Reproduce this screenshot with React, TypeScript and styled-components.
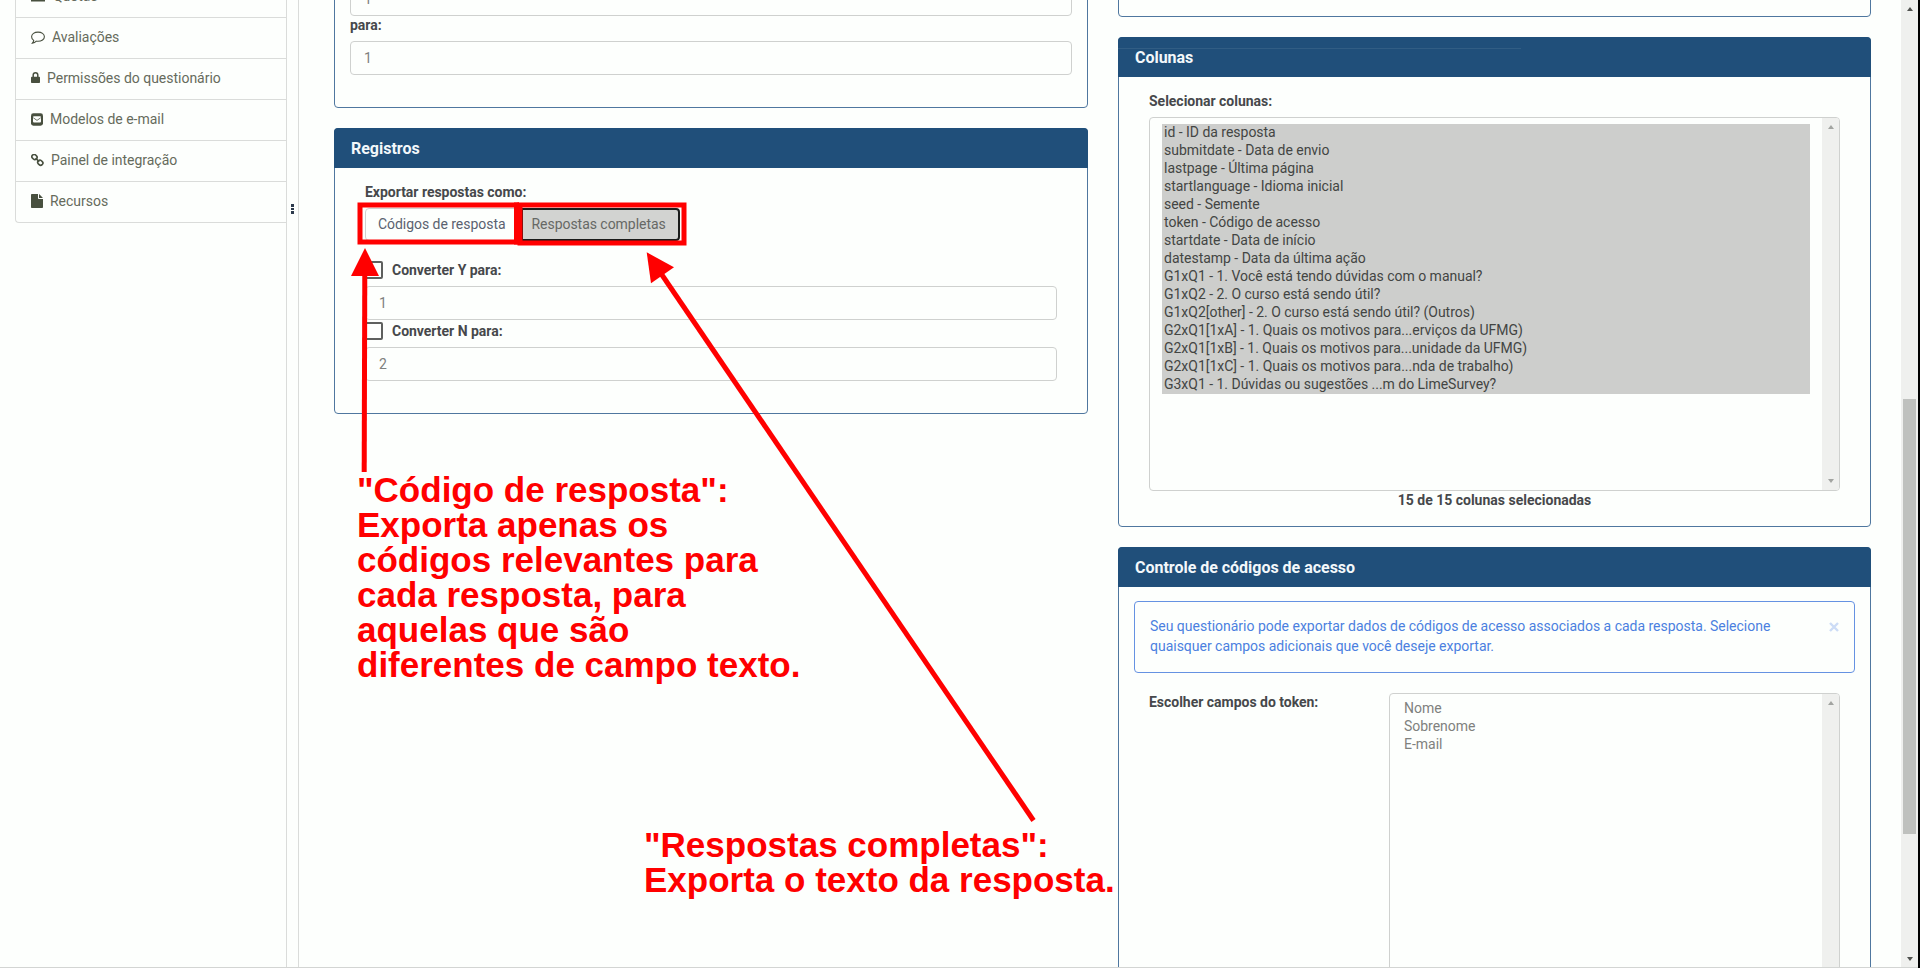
import React from 'react';
import styled, { createGlobalStyle, css } from 'styled-components';

const color = {
  page: '#fdfffd',
  navy: '#204f7a',
  panelBorder: '#4f779f',
  line: '#dadcda',
  field: '#cfd1cf',
  label: '#46484b',
  text: '#7f817e',
  nav: '#666b5c',
  navIcon: '#48503f',
  track: '#eff0ee',
  thumb: '#bfc1be',
  blue: '#4b7fe0',
  red: '#ff0000',
};

const GlobalStyle = createGlobalStyle`
  *, *::before, *::after { box-sizing: border-box; }
  html, body { margin: 0; overflow: hidden; background: ${color.page}; }
  body { font-family: Roboto, "Liberation Sans", sans-serif; font-size: 14px; line-height: 20px; }
`;

const Page = styled.div`
  position: relative;
  display: flex;
  width: 1920px;
  height: 968px;
  overflow: hidden;
  background: ${color.page};
`;

const Content = styled.div`
  display: flex;
  flex: 1;
  height: 968px;
  overflow: hidden;
  border-bottom: 1px solid #d3d5d3;
`;

/* ---------- sidebar ---------- */

const Sidebar = styled.aside`
  width: 287px;
  padding-left: 15px;
  border-right: 1px solid ${color.line};
`;

const NavList = styled.ul`
  list-style: none;
  margin: -24px 0 0;
  padding: 0;
  border: 1px solid ${color.line};
  border-width: 0 0 1px 1px;
  border-radius: 0 0 0 4px;
`;

const NavItem = styled.li<{ $gap: number }>`
  display: flex;
  align-items: center;
  gap: ${(p) => p.$gap}px;
  height: 41px;
  padding: 0 15px 2px;
  border-top: 1px solid ${color.line};
  color: ${color.nav};
  letter-spacing: -0.02px;
  svg { display: block; flex: none; color: ${color.navIcon}; }
`;

const Handle = styled.div`
  display: flex;
  flex-direction: column;
  align-items: center;
  gap: 1px;
  width: 12px;
  padding-top: 204px;
  border-right: 1px solid ${color.line};
`;

const HandleDot = styled.span`
  width: 3px;
  height: 2.6px;
  background: #2c3a4c;
`;

/* ---------- panels ---------- */

const Main = styled.main`
  display: flex;
  flex: 1;
  align-items: flex-start;
  gap: 30px;
  padding-left: 35px;
`;

const Column = styled.div<{ $width: number; $lift: number }>`
  display: flex;
  flex-direction: column;
  gap: 20px;
  width: ${(p) => p.$width}px;
  margin-top: -${(p) => p.$lift}px;
`;

const Panel = styled.section<{ $height: number }>`
  height: ${(p) => p.$height}px;
  border: 1px solid ${color.panelBorder};
  border-radius: 4px;
`;

const PanelHeader = styled.h3<{ $streak?: boolean; $line?: number }>`
  height: 40px;
  margin: -1px -1px 0;
  padding: 0 17px;
  border-radius: 4px 4px 0 0;
  background: ${color.navy};
  color: #f3f8fb;
  font-size: 16px;
  font-weight: 700;
  line-height: ${(p) => p.$line ?? 42}px;
  letter-spacing: -0.02px;
  ${(p) =>
    p.$streak &&
    css`
      background: linear-gradient(#315d84, #315d84) 0 11px / 403px 1px no-repeat ${color.navy};
    `}
`;

const PanelBody = styled.div<{ $x: number; $top: number }>`
  padding: ${(p) => p.$top}px ${(p) => p.$x}px 0;
`;

const Label = styled.label<{ $height?: number }>`
  display: block;
  height: ${(p) => p.$height ?? 20}px;
  color: ${color.label};
  font-weight: 700;
  letter-spacing: -0.02px;
`;

const BetweenLabel = styled(Label)`
  line-height: 18px;
`;

const Field = styled.div`
  display: flex;
  align-items: center;
  height: 34px;
  padding: 0 13px 1px;
  border: 1px solid ${color.field};
  border-radius: 4px;
  color: ${color.text};
`;

const ButtonGroup = styled.div`
  display: flex;
  margin-top: 6px;
`;

const ToggleButton = styled.div<{ $active?: boolean }>`
  height: 33px;
  padding: 0 14px 0 12px;
  border: 1px solid ${color.field};
  border-radius: 4px 0 0 4px;
  color: #5a6270;
  line-height: 31px;
  letter-spacing: -0.04px;
  white-space: nowrap;
  ${(p) =>
    p.$active &&
    css`
      width: 159px;
      padding: 0 9px;
      border: 2px solid #1b1c1b;
      border-radius: 0 4px 4px 0;
      background: #d2d3d1;
      color: #666865;
      line-height: 29px;
    `}
`;

const CheckRow = styled.div<{ $top: number; $bottom: number }>`
  display: flex;
  align-items: center;
  gap: 9px;
  height: 17px;
  margin: ${(p) => p.$top}px 0 ${(p) => p.$bottom}px;
`;

const Checkbox = styled.span`
  width: 18px;
  height: 18px;
  border: 2px solid #5e605e;
  border-radius: 2px;
`;

/* ---------- list boxes ---------- */

const ListBox = styled.div<{ $height: number }>`
  display: flex;
  height: ${(p) => p.$height}px;
  border: 1px solid ${color.field};
  border-radius: 4px;
  overflow: hidden;
`;

const Options = styled.div<{ $padding: string }>`
  flex: 1;
  padding: ${(p) => p.$padding};
`;

const Option = styled.div<{ $selected?: boolean }>`
  height: 18px;
  padding: 0 2px 2px;
  line-height: 16px;
  letter-spacing: -0.02px;
  color: ${(p) => (p.$selected ? '#434543' : color.text)};
  background: ${(p) => (p.$selected ? '#cdcecc' : 'transparent')};
`;

const Track = styled.div`
  display: flex;
  flex-direction: column;
  justify-content: space-between;
  align-items: center;
  width: 17px;
  padding: 7px 0;
  background: ${color.track};
`;

const Arrow = styled.span<{ $down?: boolean; $dark?: boolean }>`
  border: 3.5px solid transparent;
  ${(p) => (p.$down ? 'border-top' : 'border-bottom')}: 4px solid ${(p) => (p.$dark ? '#50524f' : '#a2a4a1')};
  ${(p) => (p.$down ? 'border-bottom' : 'border-top')}: 0;
`;

const Counter = styled.div`
  color: ${color.label};
  font-weight: 700;
  line-height: 18px;
  text-align: center;
`;

const Notice = styled.div`
  display: flex;
  justify-content: space-between;
  height: 72px;
  padding: 14px 15px;
  border: 1px solid #6692e2;
  border-radius: 4px;
  color: ${color.blue};
  letter-spacing: -0.015px;
  p { width: 640px; margin: 0; }
  svg { margin-top: 6px; }
`;

const TokenRow = styled.div`
  display: flex;
  margin-top: 20px;
  padding: 0 15px;
  ${Label} { width: 240px; line-height: 18px; }
  ${ListBox} { flex: 1; }
`;

/* ---------- window scrollbar ---------- */

const PageTrack = styled.div`
  display: flex;
  flex-direction: column;
  align-items: center;
  width: 17px;
  padding: 7px 0 6px;
  background: ${color.track};
  border-bottom: 1px solid #d3d5d3;
`;

const Thumb = styled.div`
  width: 13px;
  height: 435px;
  margin: 388px 0 auto;
  background: ${color.thumb};
`;

const WindowEdge = styled.div`
  width: 2px;
  background: #000;
`;

/* ---------- annotations ---------- */

const Markup = styled.svg`
  position: absolute;
  left: 0;
  top: 0;
  pointer-events: none;
`;

const Note = styled.p<{ $x: number; $y: number }>`
  position: absolute;
  left: ${(p) => p.$x}px;
  top: ${(p) => p.$y}px;
  margin: 0;
  color: ${color.red};
  font: 700 35px/35px "Liberation Sans", Arial, sans-serif;
  white-space: pre;
`;

const QuotaIcon = () => (
  <svg width="14" height="14" viewBox="0 0 14 14" fill="currentColor">
    <path d="M0 9h14v3.5H0zM1 5h12v3H1zM3 1h8v3H3z" />
  </svg>
);

const CommentIcon = () => (
  <svg width="14" height="14" viewBox="0 -.5 14 14" fill="none" stroke="currentColor" strokeWidth="1.1">
    <path d="M7 1.6c3.6 0 6.4 2 6.4 4.6S10.600 10.800 7 10.800c-.6 0-1.200 0-1.700-.1C4.200 11.800 2.900 12.400 1.400 12.600c.7-.7 1.200-1.500 1.300-2.700C1.300 9 .6 7.700.6 6.200.6 3.600 3.400 1.600 7 1.600z" />
  </svg>
);

const LockIcon = () => (
  <svg width="9" height="12" viewBox="0 .5 9 12">
    <path d="M2.200 6V3.600a2.300 2.300 0 0 1 4.600 0V6" fill="none" stroke="currentColor" strokeWidth="1.500" />
    <rect y="5.200" width="9" height="6.300" rx=".8" fill="currentColor" />
  </svg>
);

const MailIcon = () => (
  <svg width="12" height="13" viewBox="0 0 12 13">
    <rect y=".3" width="12" height="12.400" rx="2.400" fill="currentColor" />
    <rect x="2" y="3.200" width="8" height="6.400" rx="1" fill={color.page} />
    <path d="M2.300 4.800 6 7.400l3.700-2.600" fill="none" stroke="currentColor" strokeWidth=".8" />
  </svg>
);

const LinkIcon = () => (
  <svg width="13" height="13" viewBox="0 .5 13 13" fill="none" stroke="currentColor" strokeWidth="1.600">
    <rect x="-2.700" y="-2.200" width="5.400" height="4.400" rx="2.100" transform="translate(3.500 3.500) rotate(45)" />
    <rect x="-2.700" y="-2.200" width="5.400" height="4.400" rx="2.100" transform="translate(9.300 9.200) rotate(45)" />
    <path d="m4.600 4.600 3.600 3.600" />
  </svg>
);

const FileIcon = () => (
  <svg width="12" height="14" viewBox="0 0 12 14" fill="currentColor">
    <path d="M0 .8C0 .3.300 0 .8 0H7v4.200c0 .5.300.8.800.8H12v8.200c0 .5-.3.800-.8.800H.8c-.5 0-.8-.3-.8-.8zM8 .1c.2.100.4.200.6.400l2.900 2.900c.2.200.3.400.4.600H8z" />
  </svg>
);

const navItems = [
  { label: 'Quotas', icon: <QuotaIcon />, gap: 8 },
  { label: 'Avaliações', icon: <CommentIcon />, gap: 7 },
  { label: 'Permissões do questionário', icon: <LockIcon />, gap: 7 },
  { label: 'Modelos de e-mail', icon: <MailIcon />, gap: 7 },
  { label: 'Painel de integração', icon: <LinkIcon />, gap: 7 },
  { label: 'Recursos', icon: <FileIcon />, gap: 7 },
];

const columns = [
  'id - ID da resposta',
  'submitdate - Data de envio',
  'lastpage - Última página',
  'startlanguage - Idioma inicial',
  'seed - Semente',
  'token - Código de acesso',
  'startdate - Data de início',
  'datestamp - Data da última ação',
  'G1xQ1 - 1. Você está tendo dúvidas com o manual?',
  'G1xQ2 - 2. O curso está sendo útil?',
  'G1xQ2[other] - 2. O curso está sendo útil? (Outros)',
  'G2xQ1[1xA] - 1. Quais os motivos para...erviços da UFMG)',
  'G2xQ1[1xB] - 1. Quais os motivos para...unidade da UFMG)',
  'G2xQ1[1xC] - 1. Quais os motivos para...nda de trabalho)',
  'G3xQ1 - 1. Dúvidas ou sugestões ...m do LimeSurvey?',
];

const tokenFields = ['Nome', 'Sobrenome', 'E-mail'];

export default function App() {
  return (
    <Page>
      <GlobalStyle />
      <Content>
        <Sidebar>
          <NavList>
            {navItems.map((item) => (
              <NavItem key={item.label} $gap={item.gap}>
                {item.icon}
                <span>{item.label}</span>
              </NavItem>
            ))}
          </NavList>
        </Sidebar>
        <Handle>
          <HandleDot />
          <HandleDot />
          <HandleDot />
        </Handle>
        <Main>
          <Column $width={754} $lift={42}>
            <Panel $height={150}>
              <PanelBody $x={15} $top={23}>
                <Field>1</Field>
                <BetweenLabel $height={25}>para:</BetweenLabel>
                <Field>1</Field>
              </PanelBody>
            </Panel>
            <Panel $height={286}>
              <PanelHeader>Registros</PanelHeader>
              <PanelBody $x={30} $top={14}>
                <Label>Exportar respostas como:</Label>
                <ButtonGroup>
                  <ToggleButton>Códigos de resposta</ToggleButton>
                  <ToggleButton $active>Respostas completas</ToggleButton>
                </ButtonGroup>
                <CheckRow $top={20} $bottom={8}>
                  <Checkbox />
                  <Label>Converter Y para:</Label>
                </CheckRow>
                <Field>1</Field>
                <CheckRow $top={2} $bottom={8}>
                  <Checkbox />
                  <Label>Converter N para:</Label>
                </CheckRow>
                <Field>2</Field>
              </PanelBody>
            </Panel>
          </Column>
          <Column $width={753} $lift={43}>
            <Panel $height={60} />
            <Panel $height={490}>
              <PanelHeader $streak>Colunas</PanelHeader>
              <PanelBody $x={30} $top={14}>
                <Label $height={26}>Selecionar colunas:</Label>
                <ListBox $height={374}>
                  <Options $padding="6px 12px">
                    {columns.map((c) => (
                      <Option key={c} $selected>
                        {c}
                      </Option>
                    ))}
                  </Options>
                  <Track>
                    <Arrow />
                    <Arrow $down />
                  </Track>
                </ListBox>
                <Counter>15 de 15 colunas selecionadas</Counter>
              </PanelBody>
            </Panel>
            <Panel $height={560}>
              <PanelHeader $line={41}>Controle de códigos de acesso</PanelHeader>
              <PanelBody $x={15} $top={14}>
                <Notice>
                  <p>
                    Seu questionário pode exportar dados de códigos de acesso associados a cada resposta. Selecione
                    quaisquer campos adicionais que você deseje exportar.
                  </p>
                  <svg width="10" height="10" viewBox="0 0 10 10" stroke="#ccdcf6" strokeWidth="2.400">
                    <path d="m1 1 8 8m0-8-8 8" />
                  </svg>
                </Notice>
                <TokenRow>
                  <Label>Escolher campos do token:</Label>
                  <ListBox $height={420}>
                    <Options $padding="6px 12px">
                      {tokenFields.map((t) => (
                        <Option key={t}>{t}</Option>
                      ))}
                    </Options>
                    <Track>
                      <Arrow />
                    </Track>
                  </ListBox>
                </TokenRow>
              </PanelBody>
            </Panel>
          </Column>
        </Main>
      </Content>
      <PageTrack>
        <Arrow $dark />
        <Thumb />
        <Arrow $down $dark />
      </PageTrack>
      <WindowEdge />

      <Markup width="1920" height="968" viewBox="0 0 1920 968">
        <g fill="none" stroke={color.red} strokeWidth="5">
          <rect x="360" y="205" width="156.500" height="37" />
          <rect x="520" y="205" width="164" height="38" />
          <path d="M516.500 202.500v42" />
          <path d="M364.800 270 364.200 472" />
          <path d="M660 272 1033.500 820.500" />
        </g>
        <g fill={color.red}>
          <path d="M365 248 379 276H351z" />
          <path d="M646.700 252.300 674 267.300 651 283.300z" />
        </g>
      </Markup>
      <Note $x={357} $y={472}>
        {'"Código de resposta":\nExporta apenas os\ncódigos relevantes para\ncada resposta, para\naquelas que são\ndiferentes de campo texto.'}
      </Note>
      <Note $x={644} $y={827}>
        {'"Respostas completas":\nExporta o texto da resposta.'}
      </Note>
    </Page>
  );
}
